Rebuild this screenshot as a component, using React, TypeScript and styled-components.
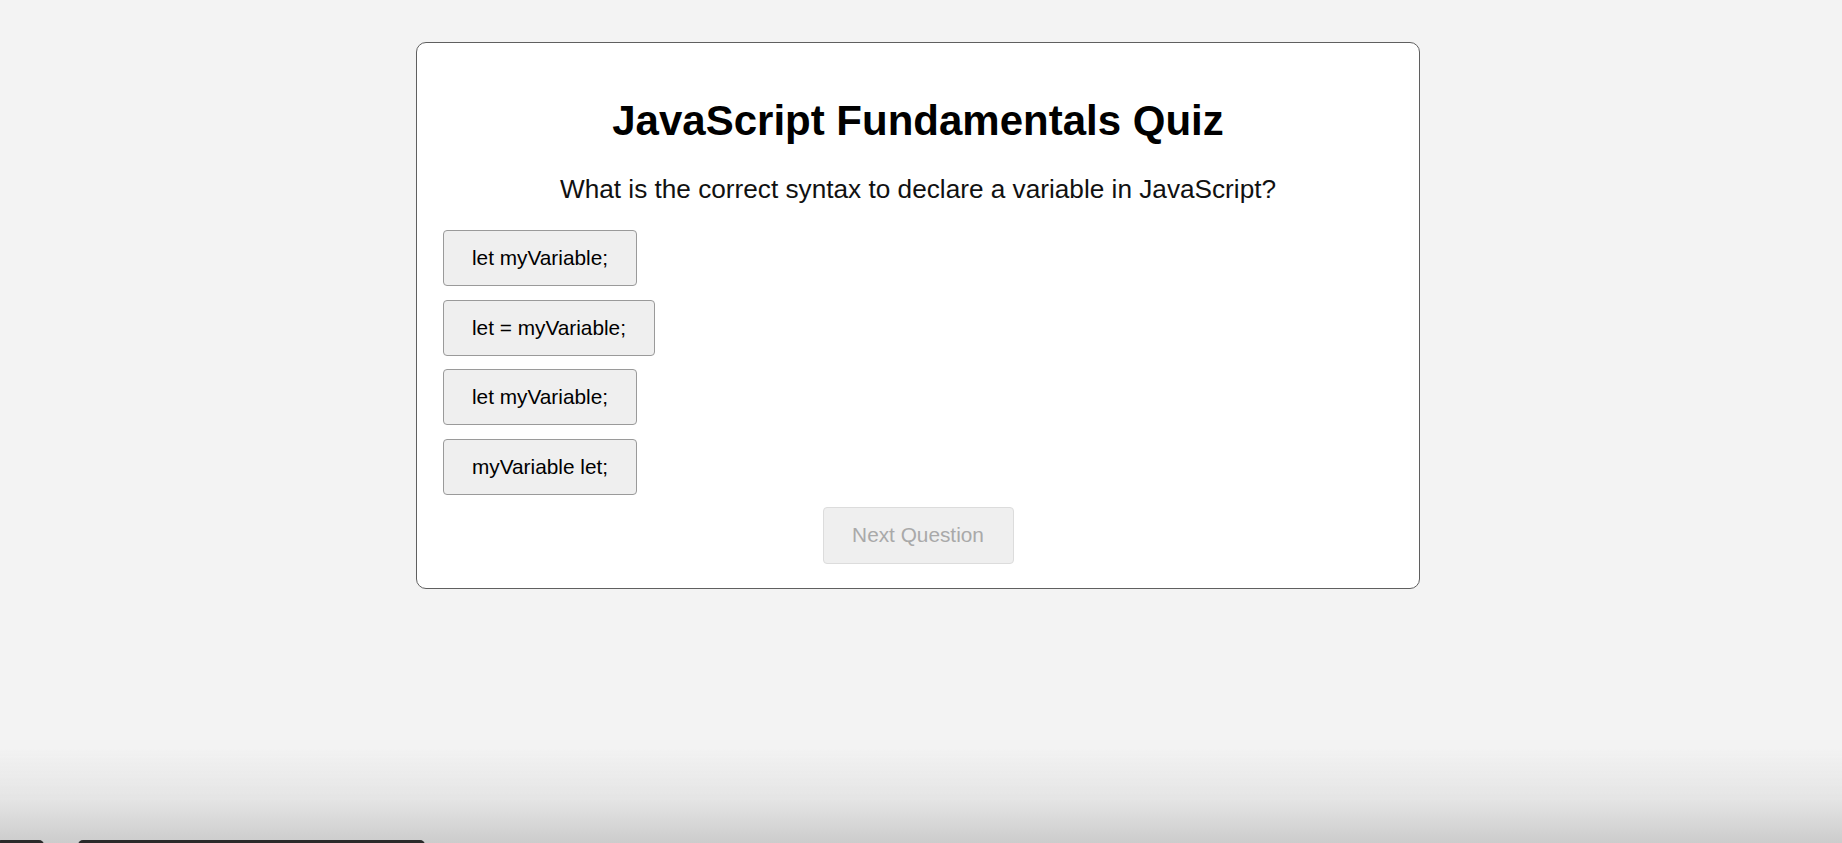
import React from "react";
import styled, { createGlobalStyle } from "styled-components";

const GlobalStyle = createGlobalStyle`
  html, body {
    margin: 0;
    padding: 0;
    height: 100%;
  }
  body {
    background: #f3f3f3;
    font-family: "Liberation Sans", Arial, Helvetica, sans-serif;
    overflow: hidden;
  }
`;

const options = [
  "let myVariable;",
  "let = myVariable;",
  "let myVariable;",
  "myVariable let;",
];

const App = () => {
  return (
    <>
      <GlobalStyle />
      <Page>
        <QuizCard>
          <Title>JavaScript Fundamentals Quiz</Title>
          <Question>
            What is the correct syntax to declare a variable in JavaScript?
          </Question>
          <OptionList>
            {options.map((option, i) => (
              <OptionButton key={i}>{option}</OptionButton>
            ))}
          </OptionList>
          <NextButton disabled>Next Question</NextButton>
        </QuizCard>
      </Page>
      <BottomShade>
        <DockPill $width={48} />
        <DockPill $width={347} />
      </BottomShade>
    </>
  );
};

export default App;

const Page = styled.div`
  padding-top: 42px;
  display: flex;
  justify-content: center;
`;

const QuizCard = styled.div`
  box-sizing: border-box;
  width: 1004px;
  margin-right: 6px;
  padding: 26px 26px 24px;
  background: #fff;
  border: 1.5px solid #5f5f5f;
  border-radius: 10px;
  display: flex;
  flex-direction: column;
`;

const Title = styled.h1`
  margin: 28px 0 0;
  font-size: 42px;
  font-weight: bold;
  line-height: 48px;
  text-align: center;
  color: #000;
`;

const Question = styled.p`
  margin: 29px 0 26px;
  font-size: 26.2px;
  line-height: 30px;
  text-align: center;
  color: #111;
`;

const OptionList = styled.div`
  display: flex;
  flex-direction: column;
  align-items: flex-start;
  gap: 13.5px;
  margin-bottom: 12px;
`;

const OptionButton = styled.button`
  font-family: "Liberation Sans", Arial, Helvetica, sans-serif;
  font-size: 20.8px;
  line-height: 24px;
  height: 56px;
  padding: 0 28px;
  color: #000;
  background: #efefef;
  border: 1.3px solid #9a9a9a;
  border-radius: 4px;
  cursor: pointer;
`;

const NextButton = styled(OptionButton)`
  align-self: center;
  width: 191px;
  height: 57px;
  color: #a9a9a9;
  background: #efefef;
  border-color: #dcdcdc;
  cursor: default;
`;

const BottomShade = styled.div`
  position: fixed;
  left: 0;
  right: 0;
  bottom: 0;
  height: 95px;
  background: linear-gradient(
    to bottom,
    rgba(243, 243, 243, 0) 0%,
    rgba(228, 228, 228, 1) 55%,
    rgba(204, 204, 204, 1) 100%
  );
  display: flex;
  align-items: flex-end;
  gap: 34px;
  pointer-events: none;
`;

const DockPill = styled.div<{ $width: number }>`
  width: ${(p) => p.$width}px;
  height: 5px;
  margin-bottom: -2px;
  background: #2a2a2a;
  border-radius: 10px 10px 0 0;
  &:first-child {
    margin-left: -4px;
  }
`;
